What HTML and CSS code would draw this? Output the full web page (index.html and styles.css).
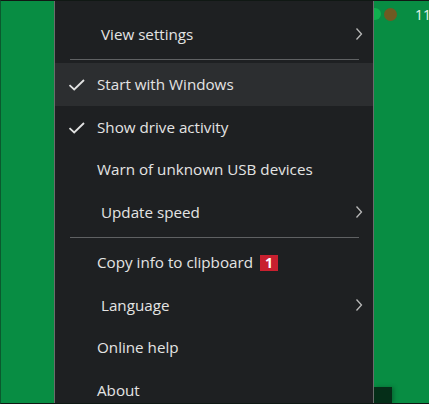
FILE: index.html
```html
<!DOCTYPE html>
<html>
<head>
<meta charset="utf-8">
<link rel="stylesheet" href="styles.css">
</head>
<body>
<div class="screen">
  <div class="side side-left"></div>
  <div class="menu">
    <ul class="list">
      <li class="item sub partial"><span class="label">Show desktop gadget</span></li>
      <li class="item sub"><span class="label">View settings</span><svg class="chev" width="8" height="14" viewBox="0 0 8 14"><path d="M1.5 1.5 L6.5 7 L1.5 12.5" fill="none" stroke="#b9b9b9" stroke-width="1.3"/></svg></li>
      <li class="sep"></li>
      <li class="item hover"><svg class="check" width="18" height="12" viewBox="0 0 18 12"><path d="M1.5 6.2 L6.2 10.5 L16 1" fill="none" stroke="#e2e2e2" stroke-width="1.8"/></svg><span class="label">Start with Windows</span></li>
      <li class="item"><svg class="check" width="18" height="12" viewBox="0 0 18 12"><path d="M1.5 6.2 L6.2 10.5 L16 1" fill="none" stroke="#e2e2e2" stroke-width="1.8"/></svg><span class="label">Show drive activity</span></li>
      <li class="item"><span class="label">Warn of unknown USB devices</span></li>
      <li class="item sub"><span class="label">Update speed</span><svg class="chev" width="8" height="14" viewBox="0 0 8 14"><path d="M1.5 1.5 L6.5 7 L1.5 12.5" fill="none" stroke="#b9b9b9" stroke-width="1.3"/></svg></li>
      <li class="sep"></li>
      <li class="item"><span class="label">Copy info to clipboard</span><span class="badge">1</span></li>
      <li class="item sub"><span class="label">Language</span><svg class="chev" width="8" height="14" viewBox="0 0 8 14"><path d="M1.5 1.5 L6.5 7 L1.5 12.5" fill="none" stroke="#b9b9b9" stroke-width="1.3"/></svg></li>
      <li class="item"><span class="label">Online help</span></li>
      <li class="item"><span class="label">About</span></li>
    </ul>
  </div>
  <div class="side side-right">
    <div class="tray">
      <span class="dot dot-green"></span>
      <span class="dot dot-brown"></span>
      <span class="clock">11</span>
    </div>
    <div class="tile"></div>
  </div>
</div>
</body>
</html>
```
FILE: styles.css
```css
html, body {
  margin: 0;
  padding: 0;
  background: #0a8c44;
}
.screen {
  width: 429px;
  height: 404px;
  box-sizing: border-box;
  border-top: 1px solid #101814;
  border-bottom: 1px solid #101814;
  border-left: 1px solid #0b5a2e;
  display: flex;
  overflow: hidden;
  background: #088d43;
  font-family: "Open Sans", "Noto Sans", sans-serif;
}
.side-left {
  width: 53px;
  flex: none;
}
.menu {
  width: 318px;
  flex: none;
  background: #1e2022;
  border-left: 1px solid #6a6d6b;
  border-right: 1px solid #6a6d6b;
  overflow: hidden;
  position: relative;
}
.list {
  list-style: none;
  margin: -31px 0 0 0;
  padding: 0;
}
.item {
  height: 42.5px;
  box-sizing: border-box;
  display: flex;
  align-items: center;
  padding-left: 42px;
  padding-right: 10px;
  color: #e4e4e4;
  font-size: 15.2px;
  position: relative;
}
.item.sub {
  padding-left: 46px;
}
.item.partial {
  padding-bottom: 5px;
}
.item.hover {
  background: #2c2e30;
}
.label {
  flex: none;
  white-space: nowrap;
}
.check {
  position: absolute;
  left: 13px;
  top: 16px;
}
.chev {
  margin-left: auto;
  margin-top: 1px;
}
.badge {
  margin-left: 7px;
  width: 18px;
  height: 16px;
  background: #c8202f;
  color: #ffffff;
  font-weight: 700;
  font-size: 14px;
  line-height: 16px;
  text-align: center;
  margin-top: 1px;
}
.sep {
  height: 8px;
  display: flex;
  align-items: center;
  padding: 0 14px 0 15px;
}
.sep::before {
  content: "";
  display: block;
  flex: 1;
  height: 1px;
  background: #5f6163;
}
.side-right {
  flex: 1;
  display: flex;
  flex-direction: column;
  justify-content: space-between;
  overflow: hidden;
}
.tray {
  display: flex;
  align-items: center;
  height: 26px;
  margin-left: -5px;
}
.dot {
  width: 12px;
  height: 12px;
  border-radius: 50%;
  flex: none;
}
.dot-green {
  background: #10b04f;
}
.dot-brown {
  background: #6f5a22;
  width: 13px;
  height: 13px;
  margin-left: 3px;
}
.clock {
  margin-left: 18px;
  color: #e8f5ec;
  font-size: 14px;
  font-family: "Open Sans", sans-serif;
  white-space: nowrap;
}
.tile {
  width: 18px;
  height: 16px;
  background: #052e18;
  box-shadow: 2px 0 4px rgba(0,0,0,0.25);
}
```
